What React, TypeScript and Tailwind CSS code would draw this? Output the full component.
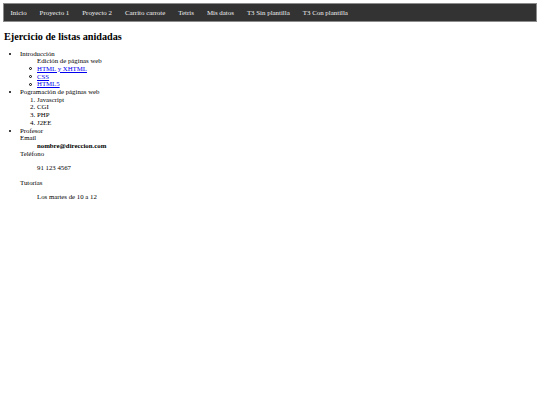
import React from 'react';

const navItems = [
  'Inicio',
  'Proyecto 1',
  'Proyecto 2',
  'Carrito carrote',
  'Tetris',
  'Mis datos',
  'T3 Sin plantilla',
  'T3 Con plantilla',
];

const links = ['HTML y XHTML', 'CSS', 'HTML5'];

const serif = { fontFamily: '"Liberation Serif", "Times New Roman", serif' };

export default function App() {
  return (
    <div
      className="w-[540px] h-[405px] bg-white text-black text-[6.8px] leading-[7.7px] pt-[3px] px-[3px]"
      style={serif}
    >
      <nav className="flex items-stretch h-[19px] bg-[#333333] border border-[#8c8c8c]">
        {navItems.map((item) => (
          <a key={item} className="flex items-center px-[6.5px] text-[#f2f2f2] text-[6.9px]">
            {item}
          </a>
        ))}
      </nav>

      <h2 className="mt-[9px] mb-[7px] text-[10.2px] leading-[11.5px] font-bold pl-[1px]">
        Ejercicio de listas anidadas
      </h2>

      <ul className="list-disc pl-[17px] marker:text-[7px]">
        <li>
          Introducción
          <div className="pl-[17px]">Edición de páginas web</div>
          <ul className="list-none pl-[9px]">
            {links.map((l) => (
              <li key={l} className="flex items-center gap-[5px]">
                <span className="w-[3px] h-[3px] rounded-full border-[0.8px] border-black shrink-0" />
                <a className="text-[#0000ee] underline">{l}</a>
              </li>
            ))}
          </ul>
        </li>
        <li>
          Pogramación de páginas web
          <ol className="list-decimal pl-[17px] marker:text-[6.8px]">
            <li>Javascript</li>
            <li>CGI</li>
            <li>PHP</li>
            <li>J2EE</li>
          </ol>
        </li>
        <li>
          Profesor
          <dl>
            <dt>Email</dt>
            <dd className="pl-[17px] font-bold">nombre@direccion.com</dd>
            <dt>Teléfono</dt>
            <dd className="pl-[17px]">
              <p className="my-[6.8px]">91 123 4567</p>
            </dd>
            <dt>
              <p className="my-[6.8px]">Tutorías</p>
            </dt>
            <dd className="pl-[17px]">
              <p className="my-[6.8px]">Los martes de 10 a 12</p>
            </dd>
          </dl>
        </li>
      </ul>
    </div>
  );
}
